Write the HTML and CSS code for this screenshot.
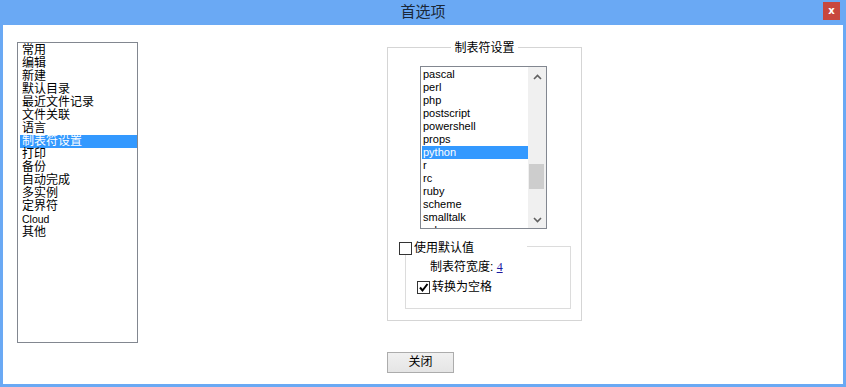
FILE: index.html
```html
<!DOCTYPE html>
<html lang="zh-CN">
<head>
<meta charset="utf-8">
<title>首选项</title>
<link rel="stylesheet" href="styles.css">
</head>
<body>
<div class="window">
  <div class="titlebar">
    <span class="title">首选项</span>
    <span class="close-x">x</span>
  </div>
  <div class="client">
    <ul class="cat-list">
      <li>常用</li>
      <li>编辑</li>
      <li>新建</li>
      <li>默认目录</li>
      <li>最近文件记录</li>
      <li>文件关联</li>
      <li>语言</li>
      <li class="sel">制表符设置</li>
      <li>打印</li>
      <li>备份</li>
      <li>自动完成</li>
      <li>多实例</li>
      <li>定界符</li>
      <li class="latin">Cloud</li>
      <li>其他</li>
    </ul>
    <div class="right">
      <div class="group">
        <div class="group-title">制表符设置</div>
        <div class="lang-list">
          <ul class="lang-items">
            <li>pascal</li>
            <li>perl</li>
            <li>php</li>
            <li>postscript</li>
            <li>powershell</li>
            <li>props</li>
            <li class="sel">python</li>
            <li>r</li>
            <li>rc</li>
            <li>ruby</li>
            <li>scheme</li>
            <li>smalltalk</li>
            <li>sql</li>
          </ul>
          <div class="scrollbar">
            <div class="arrow"><svg width="9" height="6" viewBox="0 0 9 6"><path d="M1 5 L4.5 1.5 L8 5" fill="none" stroke="#606060" stroke-width="1.6"/></svg></div>
            <div class="track-before"></div>
            <div class="thumb"></div>
            <div class="track-after"></div>
            <div class="arrow"><svg width="9" height="6" viewBox="0 0 9 6"><path d="M1 1 L4.5 4.5 L8 1" fill="none" stroke="#606060" stroke-width="1.6"/></svg></div>
          </div>
        </div>
        <div class="sub-group">
          <label class="sub-title"><span class="cb"></span>使用默认值</label>
          <div class="width-row">制表符宽度: <a class="num">4</a></div>
          <label class="convert-row"><span class="cb"><svg width="11" height="11" viewBox="0 0 11 11"><path d="M2 5.5 L4.5 8.5 L9.5 2" fill="none" stroke="#000" stroke-width="2"/></svg></span>转换为空格</label>
        </div>
      </div>
      <button class="close-btn">关闭</button>
    </div>
  </div>
</div>
</body>
</html>
```
FILE: styles.css
```css
* { box-sizing: border-box; }
html, body { margin: 0; padding: 0; }
body {
  font-family: "Liberation Sans", "Noto Sans CJK SC", sans-serif;
  font-size: 12px;
  color: #000;
}
.window {
  width: 846px;
  height: 387px;
  background: #6aa9f4;
  padding: 0 3px 3px 3px;
  display: flex;
  flex-direction: column;
}
.titlebar {
  height: 25px;
  display: grid;
  grid-template-columns: 1fr auto 1fr;
  align-items: start;
  margin: 0 -3px;
}
.title {
  grid-column: 2;
  font-size: 15px;
  line-height: 24px;
  color: #1b2838;
}
.close-x {
  grid-column: 3;
  justify-self: end;
  margin: 2px 6px 0 0;
  width: 17px;
  height: 18px;
  background: #c8473d;
  color: #fff;
  font-family: "DejaVu Sans", sans-serif;
  font-weight: bold;
  font-size: 10px;
  line-height: 17px;
  text-align: center;
}
.client {
  flex: 1;
  background: #fff;
  display: flex;
  align-items: flex-start;
  padding: 17px 0 0 14px;
}
ul { list-style: none; margin: 0; padding: 0; }
.cat-list {
  width: 121px;
  height: 301px;
  border: 1px solid #828790;
  padding: 1px 0 0 2px;
}
.cat-list li {
  height: 13px;
  line-height: 13px;
  padding-left: 2px;
  white-space: nowrap;
}
.cat-list li.latin { font-size: 10.5px; }
.sel { background: #3399ff; color: #fff; }
.right {
  margin-left: 249px;
  display: flex;
  flex-direction: column;
  align-items: flex-start;
}
.group {
  margin-top: 5px;
  width: 195px;
  height: 274px;
  border: 1px solid #d5d5d5;
  display: flex;
  flex-direction: column;
  align-items: flex-start;
}
.group-title {
  align-self: center;
  margin-top: -6px;
  height: 13px;
  line-height: 13px;
  padding: 0 3px;
  background: #fff;
}
.lang-list {
  margin: 11px 0 0 32px;
  width: 127px;
  height: 163px;
  border: 1px solid #828790;
  display: flex;
  overflow: hidden;
}
.lang-items {
  flex: 1;
  padding: 1px 0 0 1px;
  overflow: hidden;
  font-size: 11px;
}
.lang-items li {
  height: 13px;
  line-height: 13px;
  padding-left: 1px;
}
.scrollbar {
  width: 18px;
  background: #f0f0f0;
  display: flex;
  flex-direction: column;
}
.arrow {
  height: 17px;
  display: flex;
  align-items: center;
  justify-content: center;
  padding-top: 2px;
}
.arrow:last-child { padding-top: 0; }
.track-before { height: 80px; }
.thumb {
  height: 25px;
  margin: 0 2px 0 1px;
  background: #cdcdcd;
}
.track-after { flex: 1; }
.sub-group {
  margin: 17px 0 0 17px;
  width: 166px;
  height: 63px;
  border: 1px solid #dcdcdc;
  display: flex;
  flex-direction: column;
  align-items: flex-start;
}
.sub-title {
  margin: -5px 0 0 -10px;
  width: 131px;
  height: 13px;
  padding-left: 3px;
  background: #fff;
  display: flex;
  align-items: center;
  line-height: 13px;
}
.cb {
  width: 13px;
  height: 13px;
  border: 1px solid #333;
  background: #fff;
  margin-right: 2px;
  display: flex;
  align-items: center;
  justify-content: center;
  flex: none;
}
.width-row {
  margin: 6px 0 0 24px;
  height: 13px;
  line-height: 13px;
}
.num {
  font-family: "Liberation Serif", serif;
  font-size: 12px;
  color: #1a1aa0;
  text-decoration: underline;
}
.convert-row {
  margin: 7px 0 0 11px;
  display: flex;
  align-items: center;
  height: 13px;
  line-height: 13px;
}
.close-btn {
  margin-top: 31px;
  width: 67px;
  height: 21px;
  border: 1px solid #acacac;
  background: linear-gradient(#f0f0f0, #e5e5e5);
  font-family: "Liberation Sans", "Noto Sans CJK SC", sans-serif;
  font-size: 12px;
  padding: 0;
  line-height: 19px;
  color: #000;
}
```
